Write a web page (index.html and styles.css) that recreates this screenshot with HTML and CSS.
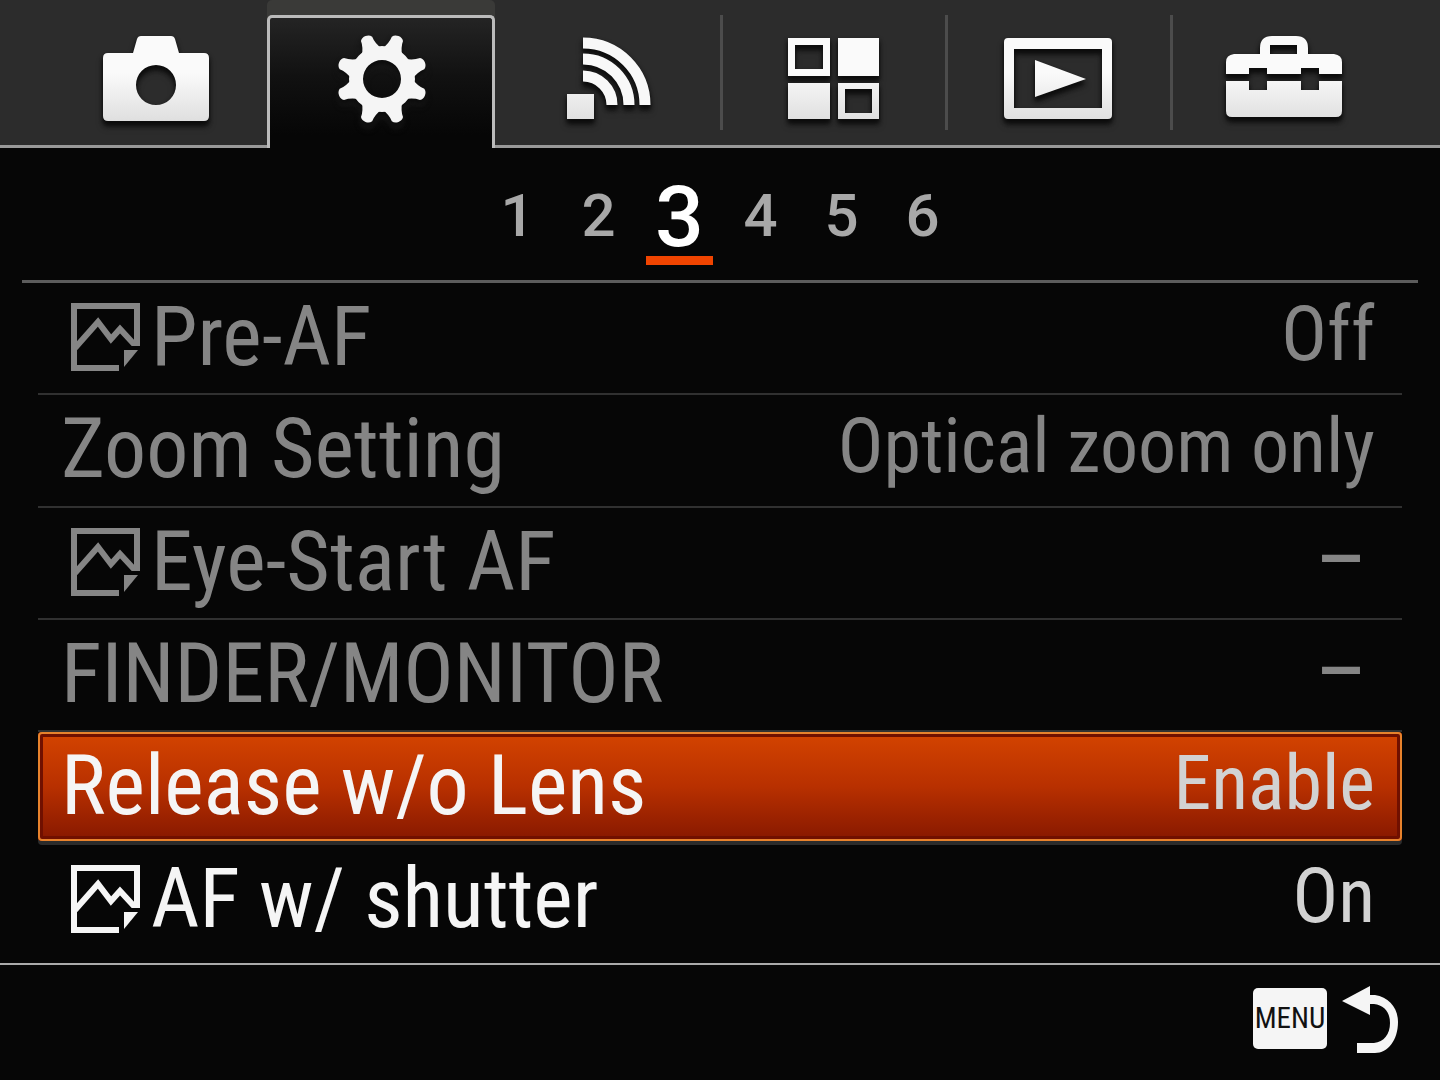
FILE: index.html
```
<!DOCTYPE html>
<html lang="en">
<head>
  <meta charset="UTF-8">
  <meta name="viewport" content="width=device-width, initial-scale=1.0">
  <title>Camera Menu</title>
  <link rel="stylesheet" href="styles.css">
</head>
<body>
  <!-- shared icon parts -->
  <svg class="defs" width="0" height="0" aria-hidden="true">
    <defs>
      <linearGradient id="metal" gradientUnits="userSpaceOnUse" x1="0" y1="0" x2="0" y2="100">
        <stop offset="0.4" stop-color="#fafafa"/>
        <stop offset="0.9" stop-color="#dedede"/>
      </linearGradient>
      <path id="tooth" d="M-11 -28Q-6 -36 -6 -43Q-4 -46 0 -46Q4 -46 6 -43Q6 -36 11 -28Z"/>
      <symbol id="still" viewBox="0 0 70 70">
        <path d="M48 66H3V4H66V40" fill="none" stroke="currentColor" stroke-width="6"/>
        <path d="M4 46L27 20L40 37L49 27L62 41H69" fill="none" stroke="currentColor" stroke-width="6"/>
        <path d="M53 48H67L53 65Z" fill="currentColor"/>
      </symbol>
    </defs>
  </svg>

  <nav class="tabs" aria-label="Menu tabs">
    <span class="edge"></span>
    <button class="tab" aria-label="Camera settings">
      <svg class="icon" viewBox="-2 0 120 100">
        <path fill="url(#metal)" fill-rule="evenodd" d="M37 6Q38 3 41 3H71Q74 3 75 6L79 20H104Q109 20 109 25V83Q109 88 104 88H8Q3 88 3 83V25Q3 20 8 20H33ZM56 32A20 20 0 1 0 56 72A20 20 0 1 0 56 32Z"/>
      </svg>
    </button>
    <button class="tab active" aria-label="Custom settings">
      <svg class="icon" viewBox="0 0 120 100">
        <g fill="#f5f5f5" transform="translate(61 46)">
          <path fill-rule="evenodd" d="M0 -33A33 33 0 1 0 0 33A33 33 0 1 0 0 -33ZM0 -19A19 19 0 1 1 0 19A19 19 0 1 1 0 -19Z"/>
          <use href="#tooth" transform="rotate(21)"/>
          <use href="#tooth" transform="rotate(69)"/>
          <use href="#tooth" transform="rotate(111)"/>
          <use href="#tooth" transform="rotate(159)"/>
          <use href="#tooth" transform="rotate(201)"/>
          <use href="#tooth" transform="rotate(249)"/>
          <use href="#tooth" transform="rotate(291)"/>
          <use href="#tooth" transform="rotate(339)"/>
        </g>
      </svg>
    </button>
    <button class="tab" aria-label="Wireless">
      <svg class="icon" viewBox="0 0 120 100">
        <rect x="19" y="61" width="27" height="25" fill="url(#metal)"/>
        <g fill="none" stroke="#f8f8f8" stroke-width="11">
          <path d="M35 43A29 29 0 0 1 64 72"/>
          <path d="M35 26A46 46 0 0 1 81 72"/>
          <path d="M35 10A62 62 0 0 1 97 72"/>
        </g>
      </svg>
    </button>
    <button class="tab" aria-label="Applications">
      <svg class="icon" viewBox="0 0 120 100">
        <g fill="url(#metal)" fill-rule="evenodd">
          <path d="M15 5H57V43H15ZM22 12V36H50V12Z"/>
          <path d="M65 5H106V43H65Z"/>
          <path d="M15 50H57V86H15Z"/>
          <path d="M65 50H106V86H65ZM72 56V80H99V56Z"/>
        </g>
      </svg>
    </button>
    <button class="tab" aria-label="Playback">
      <svg class="icon" viewBox="0 0 120 100">
        <path fill="url(#metal)" fill-rule="evenodd" d="M10 5H110Q114 5 114 9V82Q114 86 110 86H10Q6 86 6 82V9Q6 5 10 5ZM16 16V75H104V16Z"/>
        <path fill="url(#metal)" d="M37 27L88 46L37 64Z"/>
      </svg>
    </button>
    <button class="tab" aria-label="Setup">
      <svg class="icon" viewBox="-1 0 120 100">
        <g fill="url(#metal)" fill-rule="evenodd">
          <path d="M10 21H36V15Q36 3 48 3H72Q84 3 84 15V21H110Q118 22 118 29V41H95V35H77V41H43V35H25V41H2V29Q2 22 10 21ZM46 21H73V12H46Z"/>
          <path d="M2 48H25V57H43V48H77V57H95V48H118V78Q118 84 112 84H8Q2 84 2 78Z"/>
        </g>
      </svg>
    </button>
    <span class="edge"></span>
  </nav>

  <nav class="pages" aria-label="Pages">
    <button class="page">1</button>
    <button class="page">2</button>
    <button class="page current" aria-current="page">3</button>
    <button class="page">4</button>
    <button class="page">5</button>
    <button class="page">6</button>
  </nav>

  <main class="menu">
    <button class="item disabled">
      <span class="label"><svg class="still"><use href="#still"/></svg>Pre-AF</span>
      <span class="value">Off</span>
    </button>
    <button class="item disabled">
      <span class="label">Zoom Setting</span>
      <span class="value">Optical zoom only</span>
    </button>
    <button class="item disabled">
      <span class="label"><svg class="still"><use href="#still"/></svg>Eye-Start AF</span>
      <span class="value dash">–</span>
    </button>
    <button class="item disabled">
      <span class="label">FINDER/MONITOR</span>
      <span class="value dash">–</span>
    </button>
    <button class="item selected">
      <span class="label">Release w/o Lens</span>
      <span class="value">Enable</span>
    </button>
    <button class="item">
      <span class="label"><svg class="still"><use href="#still"/></svg>AF w/ shutter</span>
      <span class="value">On</span>
    </button>
  </main>

  <footer class="bar">
    <button class="back">
      <span class="key">MENU</span>
      <svg class="return" viewBox="0 0 56 68" aria-hidden="true">
        <path fill="#f5f5f5" d="M0 15L28 0V9H33C47 11 56 22 56 36C56 54 46 67 33 67H15V57H32C42 56 48 48 48 37C48 26 42 19 32 18H28V29Z"/>
      </svg>
    </button>
  </footer>
</body>
</html>
```
FILE: styles.css
```
* { box-sizing: border-box; }
body {
  margin: 0;
  min-height: 100vh;
  display: flex;
  flex-direction: column;
  background: #060606;
  color: #f5f5f5;
  font-family: "Roboto Condensed", "Liberation Sans Narrow", "Liberation Sans", sans-serif;
}
button {
  margin: 0;
  padding: 0;
  border: none;
  background: none;
  color: inherit;
  font: inherit;
  cursor: pointer;
}
.defs { position: absolute; }

/* top tabs */
.tabs {
  display: grid;
  grid-template-columns: 1fr repeat(6, 5fr) 1fr;
  height: 148px;
  padding-top: 15px;
  background: #2c2c2c;
}
.edge { border-bottom: 3px solid #999; }
.tab {
  display: flex;
  justify-content: center;
  padding-top: 18px;
  border-bottom: 3px solid #999;
  background: linear-gradient(#4c4c4c, #4c4c4c) left top / 3px 115px no-repeat;
}
.tab:first-of-type, .active + .tab { background: none; }
.tab.active {
  margin-left: -3px;
  border: 3px solid #bbb;
  border-bottom: none;
  border-radius: 5px 5px 0 0;
  padding-top: 15px;
  background: linear-gradient(#242424, #111 45%, #060606 90%);
  box-shadow: 0 -15px 0 #3a3a38;
}
.icon {
  width: 120px;
  height: 100px;
  filter: drop-shadow(0 4px 2px #0c0c0c) drop-shadow(0 2px 2px #181818);
}

/* page numbers */
.pages {
  display: flex;
  justify-content: center;
  align-items: flex-start;
  gap: 14px;
  height: 135px;
  margin: 0 22px;
  padding-top: 30px;
  border-bottom: 3px solid #5c5c5c;
}
.page {
  width: 67px;
  height: 76px;
  font-family: Roboto, "Liberation Sans", sans-serif;
  font-size: 60px;
  font-weight: 500;
  line-height: 76px;
  color: #a8a8a8;
}
.page.current {
  height: 87px;
  font-size: 86px;
  color: #fff;
  border-bottom: 9px solid #f04400;
}

/* setting rows */
.menu {
  flex: 1;
  display: grid;
  grid-template-rows: repeat(6, minmax(0, 1fr));
  margin: 0 38px;
  padding-bottom: 6px;
}
.item {
  display: flex;
  justify-content: space-between;
  align-items: flex-start;
  padding: 0 27px 0 23px;
  border-bottom: 2px solid #303030;
  text-align: left;
}
.item:last-child { border-bottom: none; }
.label {
  display: flex;
  align-items: center;
  font-size: 84px;
  line-height: 108px;
}
.value {
  font-size: 76px;
  line-height: 102px;
  color: #d2d2d2;
}
.value.dash {
  padding-right: 10px;
  font-family: Roboto, "Liberation Sans", sans-serif;
  font-weight: 500;
}
.disabled, .disabled .value { color: #858585; }
.selected {
  margin-bottom: 4px;
  border: none;
  border-radius: 4px;
  background: linear-gradient(#d44400, #b83000 50%, #861800);
  box-shadow: inset 0 0 0 2px #e8822c, inset 0 0 0 5px #701000, 0 4px 0 #2b2b2b;
}
.still {
  width: 70px;
  height: 70px;
  margin: 0 10px;
}

/* bottom bar */
.bar {
  display: flex;
  justify-content: flex-end;
  height: 117px;
  padding: 21px 42px 0 0;
  border-top: 2px solid #aaa;
}
.back {
  display: flex;
  align-items: flex-start;
  gap: 15px;
  height: 68px;
}
.key {
  width: 74px;
  height: 61px;
  margin-top: 2px;
  border-radius: 5px;
  background: #f5f5f5;
  color: #111;
  font-size: 29px;
  line-height: 61px;
  text-align: center;
}
.return { width: 56px; height: 68px; }
```
